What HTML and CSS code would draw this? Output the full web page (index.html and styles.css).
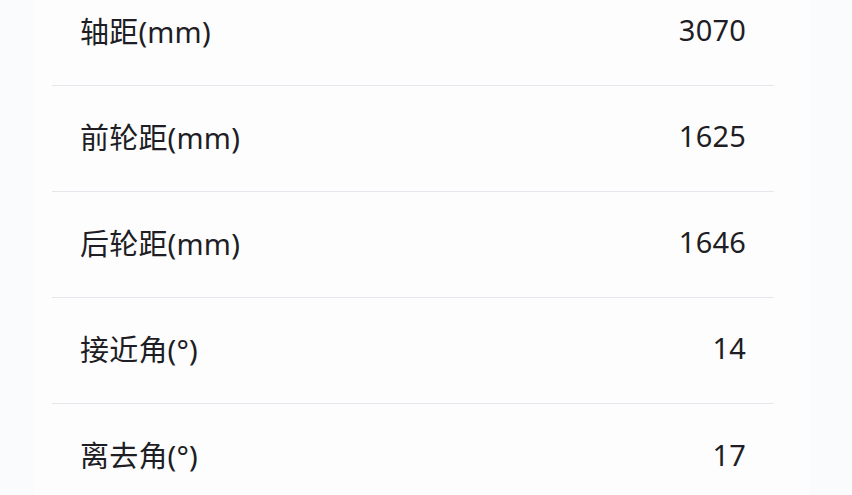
FILE: index.html
```html
<!DOCTYPE html>
<html lang="zh-CN">
<head>
  <meta charset="UTF-8" />
  <meta name="viewport" content="width=device-width, initial-scale=1.0"/>
  <title>车身参数</title>
  <link rel="stylesheet" href="styles.css">
</head>
<body>

  <div class="card">
    <ul class="spec-list">
      <li class="spec-row">
        <span class="spec-name">轴距(mm)</span>
        <span class="spec-value">3070</span>
      </li>
      <li class="spec-row">
        <span class="spec-name">前轮距(mm)</span>
        <span class="spec-value">1625</span>
      </li>
      <li class="spec-row">
        <span class="spec-name">后轮距(mm)</span>
        <span class="spec-value">1646</span>
      </li>
      <li class="spec-row">
        <span class="spec-name">接近角(°)</span>
        <span class="spec-value">14</span>
      </li>
      <li class="spec-row">
        <span class="spec-name">离去角(°)</span>
        <span class="spec-value">17</span>
      </li>
    </ul>
  </div>

</body>
</html>
```

FILE: styles.css
```css
/* ---------------- GENERAL ---------------- */
body, html {
  margin: 0;
  height: 100%;
  background: #fafbfd;
  font-family: "Noto Sans", "Noto Sans CJK SC", sans-serif;
  color: #1e1e24;
  overflow: hidden;
}

.card {
  display: flow-root;
  margin: 0 42px 0 34px;
  height: 100%;
  background: #fdfdfe;
}

/* ---------------- SPEC LIST ---------------- */
.spec-list {
  list-style: none;
  margin: -20px 36px 0 18px;
  padding: 0;
}

.spec-row {
  box-sizing: border-box;
  display: flex;
  align-items: center;
  justify-content: space-between;
  height: 106px;
  padding: 0 28px 6px;
  border-bottom: 1px solid #e4e7ec;
  font-size: 29px;
  letter-spacing: 0.2px;
}

.spec-row:last-child {
  border-bottom: none;
}

.spec-value {
  text-align: right;
}
```
